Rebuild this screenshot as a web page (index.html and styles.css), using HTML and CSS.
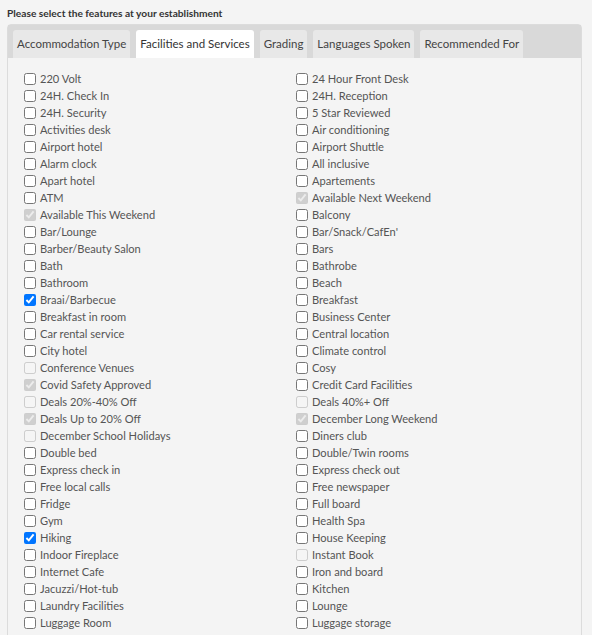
FILE: index.html
```html
<!DOCTYPE html>
<html>
<head>
<meta charset="utf-8">
<link rel="stylesheet" href="styles.css">
</head>
<body>
<div class="title">Please select the features at your establishment</div>
<div class="tabs-box">
  <div class="tab-bar">
    <div class="tab">Accommodation Type</div>
    <div class="tab active">Facilities and Services</div>
    <div class="tab">Grading</div>
    <div class="tab">Languages Spoken</div>
    <div class="tab">Recommended For</div>
  </div>
  <div class="panel">
    <label class="item"><input type="checkbox"><span>220 Volt</span></label>
    <label class="item"><input type="checkbox"><span>24 Hour Front Desk</span></label>
    <label class="item"><input type="checkbox"><span>24H. Check In</span></label>
    <label class="item"><input type="checkbox"><span>24H. Reception</span></label>
    <label class="item"><input type="checkbox"><span>24H. Security</span></label>
    <label class="item"><input type="checkbox"><span>5 Star Reviewed</span></label>
    <label class="item"><input type="checkbox"><span>Activities desk</span></label>
    <label class="item"><input type="checkbox"><span>Air conditioning</span></label>
    <label class="item"><input type="checkbox"><span>Airport hotel</span></label>
    <label class="item"><input type="checkbox"><span>Airport Shuttle</span></label>
    <label class="item"><input type="checkbox"><span>Alarm clock</span></label>
    <label class="item"><input type="checkbox"><span>All inclusive</span></label>
    <label class="item"><input type="checkbox"><span>Apart hotel</span></label>
    <label class="item"><input type="checkbox"><span>Apartements</span></label>
    <label class="item"><input type="checkbox"><span>ATM</span></label>
    <label class="item"><input type="checkbox" checked disabled><span>Available Next Weekend</span></label>
    <label class="item"><input type="checkbox" checked disabled><span>Available This Weekend</span></label>
    <label class="item"><input type="checkbox"><span>Balcony</span></label>
    <label class="item"><input type="checkbox"><span>Bar/Lounge</span></label>
    <label class="item"><input type="checkbox"><span>Bar/Snack/CafEn'</span></label>
    <label class="item"><input type="checkbox"><span>Barber/Beauty Salon</span></label>
    <label class="item"><input type="checkbox"><span>Bars</span></label>
    <label class="item"><input type="checkbox"><span>Bath</span></label>
    <label class="item"><input type="checkbox"><span>Bathrobe</span></label>
    <label class="item"><input type="checkbox"><span>Bathroom</span></label>
    <label class="item"><input type="checkbox"><span>Beach</span></label>
    <label class="item"><input type="checkbox" checked><span>Braai/Barbecue</span></label>
    <label class="item"><input type="checkbox"><span>Breakfast</span></label>
    <label class="item"><input type="checkbox"><span>Breakfast in room</span></label>
    <label class="item"><input type="checkbox"><span>Business Center</span></label>
    <label class="item"><input type="checkbox"><span>Car rental service</span></label>
    <label class="item"><input type="checkbox"><span>Central location</span></label>
    <label class="item"><input type="checkbox"><span>City hotel</span></label>
    <label class="item"><input type="checkbox"><span>Climate control</span></label>
    <label class="item"><input type="checkbox" disabled><span>Conference Venues</span></label>
    <label class="item"><input type="checkbox"><span>Cosy</span></label>
    <label class="item"><input type="checkbox" checked disabled><span>Covid Safety Approved</span></label>
    <label class="item"><input type="checkbox"><span>Credit Card Facilities</span></label>
    <label class="item"><input type="checkbox" disabled><span>Deals 20%-40% Off</span></label>
    <label class="item"><input type="checkbox" disabled><span>Deals 40%+ Off</span></label>
    <label class="item"><input type="checkbox" checked disabled><span>Deals Up to 20% Off</span></label>
    <label class="item"><input type="checkbox" checked disabled><span>December Long Weekend</span></label>
    <label class="item"><input type="checkbox" disabled><span>December School Holidays</span></label>
    <label class="item"><input type="checkbox"><span>Diners club</span></label>
    <label class="item"><input type="checkbox"><span>Double bed</span></label>
    <label class="item"><input type="checkbox"><span>Double/Twin rooms</span></label>
    <label class="item"><input type="checkbox"><span>Express check in</span></label>
    <label class="item"><input type="checkbox"><span>Express check out</span></label>
    <label class="item"><input type="checkbox"><span>Free local calls</span></label>
    <label class="item"><input type="checkbox"><span>Free newspaper</span></label>
    <label class="item"><input type="checkbox"><span>Fridge</span></label>
    <label class="item"><input type="checkbox"><span>Full board</span></label>
    <label class="item"><input type="checkbox"><span>Gym</span></label>
    <label class="item"><input type="checkbox"><span>Health Spa</span></label>
    <label class="item"><input type="checkbox" checked><span>Hiking</span></label>
    <label class="item"><input type="checkbox"><span>House Keeping</span></label>
    <label class="item"><input type="checkbox"><span>Indoor Fireplace</span></label>
    <label class="item"><input type="checkbox" disabled><span>Instant Book</span></label>
    <label class="item"><input type="checkbox"><span>Internet Cafe</span></label>
    <label class="item"><input type="checkbox"><span>Iron and board</span></label>
    <label class="item"><input type="checkbox"><span>Jacuzzi/Hot-tub</span></label>
    <label class="item"><input type="checkbox"><span>Kitchen</span></label>
    <label class="item"><input type="checkbox"><span>Laundry Facilities</span></label>
    <label class="item"><input type="checkbox"><span>Lounge</span></label>
    <label class="item"><input type="checkbox"><span>Luggage Room</span></label>
    <label class="item"><input type="checkbox"><span>Luggage storage</span></label>
  </div>
</div>
</body>
</html>
```
FILE: styles.css
```css
html, body {
  margin: 0;
  background: #f4f4f4;
}
body {
  padding: 6px 7px 0 7px;
  font-family: Lato, "Open Sans", sans-serif;
  color: #555;
}
.title {
  font-size: 10.2px;
  font-weight: bold;
  color: #333;
  line-height: 14px;
  height: 18px;
}
.tabs-box {
  width: 573px;
  border: 1px solid #dcdcdc;
  border-radius: 4px 4px 0 0;
  background: #f4f4f4;
}
.tab-bar {
  display: flex;
  gap: 6px;
  background: #d9d9d9;
  padding: 5px 5px 0 5px;
  height: 28px;
}
.tab {
  font-size: 11.5px;
  line-height: 28px;
  padding: 0 4px;
  background: #e8e8e8;
  color: #444;
  border-radius: 3px 3px 0 0;
}
.tab.active {
  background: #fff;
  color: #333;
}
.panel {
  display: grid;
  grid-template-columns: 272px 272px;
  padding: 12px 0 20px 16px;
}
.item {
  display: flex;
  align-items: center;
  height: 17px;
  font-size: 11.1px;
  color: #555;
}
.item input {
  margin: 0 4px 0 0;
  width: 12px;
  height: 12px;
}
```
